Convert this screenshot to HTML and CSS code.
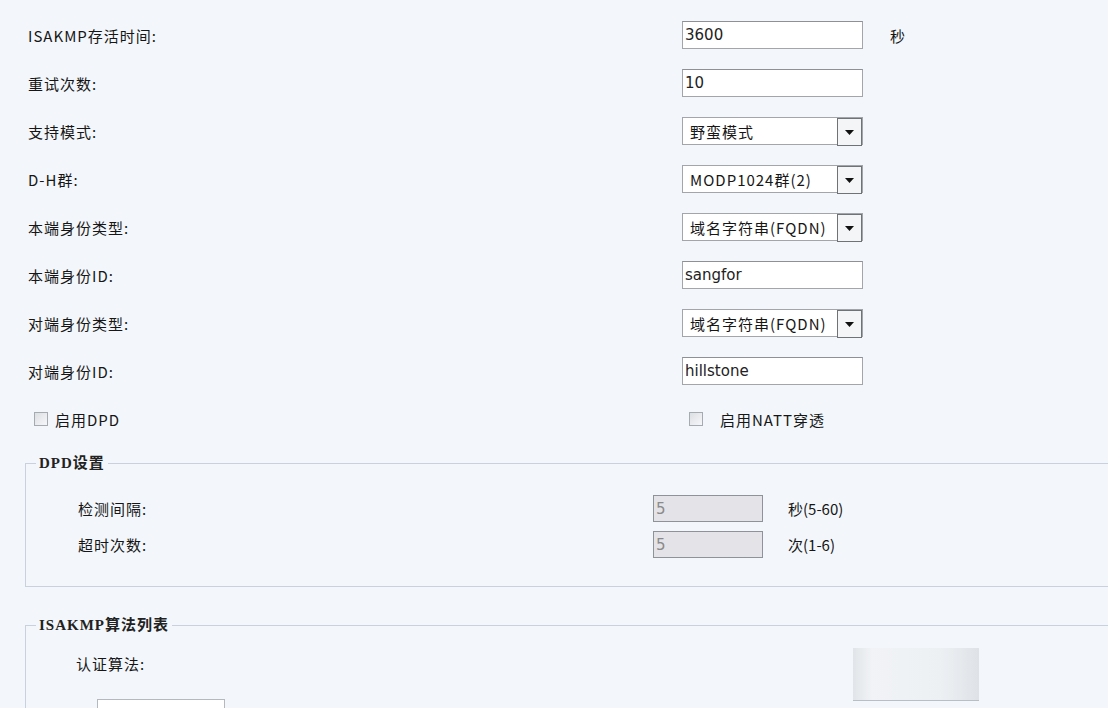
FILE: index.html
```html
<!DOCTYPE html>
<html lang="zh-CN">
<head>
    <meta charset="UTF-8">
    <title>IKE设置</title>
    <link rel="stylesheet" href="styles.css">
</head>
<body>
    <div class="page">
        <div class="form-grid">
            <label>ISAKMP存活时间:</label>
            <input type="text" value="3600">
            <span class="unit">秒</span>

            <label>重试次数:</label>
            <input type="text" value="10">
            <span></span>

            <label>支持模式:</label>
            <span class="select-wrap"><select><option>野蛮模式</option></select></span>
            <span></span>

            <label>D-H群:</label>
            <span class="select-wrap"><select><option>MODP1024群(2)</option></select></span>
            <span></span>

            <label>本端身份类型:</label>
            <span class="select-wrap"><select><option>域名字符串(FQDN)</option></select></span>
            <span></span>

            <label>本端身份ID:</label>
            <input type="text" value="sangfor">
            <span></span>

            <label>对端身份类型:</label>
            <span class="select-wrap"><select><option>域名字符串(FQDN)</option></select></span>
            <span></span>

            <label>对端身份ID:</label>
            <input type="text" value="hillstone">
            <span></span>

            <div class="check"><input type="checkbox"><span>启用DPD</span></div>
            <div class="check natt"><input type="checkbox"><span>启用NATT穿透</span></div>
        </div>

        <fieldset class="group">
            <legend>DPD设置</legend>
            <div class="group-grid">
                <label>检测间隔:</label>
                <input type="text" value="5" disabled>
                <span class="unit">秒(5-60)</span>

                <label>超时次数:</label>
                <input type="text" value="5" disabled>
                <span class="unit">次(1-6)</span>
            </div>
        </fieldset>

        <fieldset class="group algo">
            <legend>ISAKMP算法列表</legend>
            <div class="algo-body">
                <label>认证算法:</label>
                <div class="list-box"></div>
            </div>
            <div class="blur-btn"></div>
        </fieldset>
    </div>
</body>
</html>
```

FILE: styles.css
```css
* {
    box-sizing: border-box;
    margin: 0;
    padding: 0;
}

html, body {
    height: 100%;
    overflow: hidden;
    background-color: #f3f7fb;
    font-family: "Noto Sans CJK SC", sans-serif;
    font-size: 15px;
    color: #161616;
}

.page {
    padding-top: 21px;
}

label {
    letter-spacing: 1px;
}

.form-grid {
    display: grid;
    grid-template-columns: 654px 181px auto;
    grid-auto-rows: 28px;
    row-gap: 20px;
    align-items: center;
    margin-left: 28px;
}

input[type="text"] {
    height: 28px;
    width: 100%;
    border: 1px solid #a2a6ab;
    border-top-color: #8d9196;
    background-color: #fff;
    padding: 0 2px;
    font-family: "DejaVu Sans", sans-serif;
    font-size: 15px;
    color: #222;
    outline: none;
}

input[type="text"]:disabled {
    background-color: #e4e4e8;
    border-color: #8e9399;
    color: #8a8a8a;
}

.unit {
    margin-left: 27px;
    white-space: nowrap;
}

.select-wrap {
    position: relative;
    display: block;
    height: 28px;
}

.select-wrap select {
    appearance: none;
    -webkit-appearance: none;
    width: 100%;
    height: 28px;
    border: 1px solid #a2a6ab;
    background-color: #fff;
    padding: 0 30px 0 7px;
    font-family: "Noto Sans CJK SC", sans-serif;
    font-size: 15px;
    letter-spacing: 1px;
    color: #161616;
    outline: none;
}

/* arrow button drawn over the right end of the select */
.select-wrap::after {
    content: "";
    position: absolute;
    top: 1px;
    right: 1px;
    width: 23px;
    height: 26px;
    border: 1px solid #6f7377;
    background: #f4f5f7 url("data:image/svg+xml,%3Csvg xmlns='http://www.w3.org/2000/svg' width='9' height='5'%3E%3Cpath d='M0 0h9L4.5 5z' fill='%23111'/%3E%3C/svg%3E") no-repeat center;
    pointer-events: none;
}

.check {
    display: flex;
    align-items: center;
    gap: 7px;
    padding-left: 6px;
    letter-spacing: 1px;
}

.check.natt {
    grid-column: 2 / 4;
    padding-left: 7px;
    gap: 17px;
}

.check input {
    appearance: none;
    -webkit-appearance: none;
    width: 14px;
    height: 14px;
    border: 1px solid #a6abb1;
    background: linear-gradient(135deg, #dcdfe3, #f6f7f9);
}

.group {
    position: relative;
    margin: 20px -20px 0 25px;
    border: 1px solid #c9d2dc;
    padding: 22px 0 28px 10px;
}

.group legend {
    padding: 0 3px;
    line-height: 20px;
    font-family: "Liberation Serif", "Noto Sans CJK SC", serif;
    font-size: 15px;
    font-weight: bold;
    letter-spacing: 1px;
    color: #222;
}

.group-grid {
    display: grid;
    grid-template-columns: 575px 110px auto;
    grid-auto-rows: 27px;
    row-gap: 9px;
    align-items: center;
    padding-left: 42px;
}

.group-grid input[type="text"] {
    height: 27px;
}

.group-grid .unit {
    margin-left: 25px;
}

.algo {
    margin-top: 28px;
    padding: 19px 0 40px 10px;
}

.algo-body {
    padding-left: 40px;
}

.algo-body label {
    display: block;
    line-height: 20px;
}

.list-box {
    margin: 25px 0 0 21px;
    width: 128px;
    height: 40px;
    border: 1px solid #b4b9bf;
    background-color: #fff;
}

/* faded button left over on the right */
.blur-btn {
    position: absolute;
    top: 13px;
    left: 827px;
    width: 126px;
    height: 53px;
    background: linear-gradient(to right, #dde1e5, #f1f3f5 15%, #eceff2 70%, #dadee2);
    border-bottom: 1px solid #aab1b8;
    opacity: 0.8;
}
```
